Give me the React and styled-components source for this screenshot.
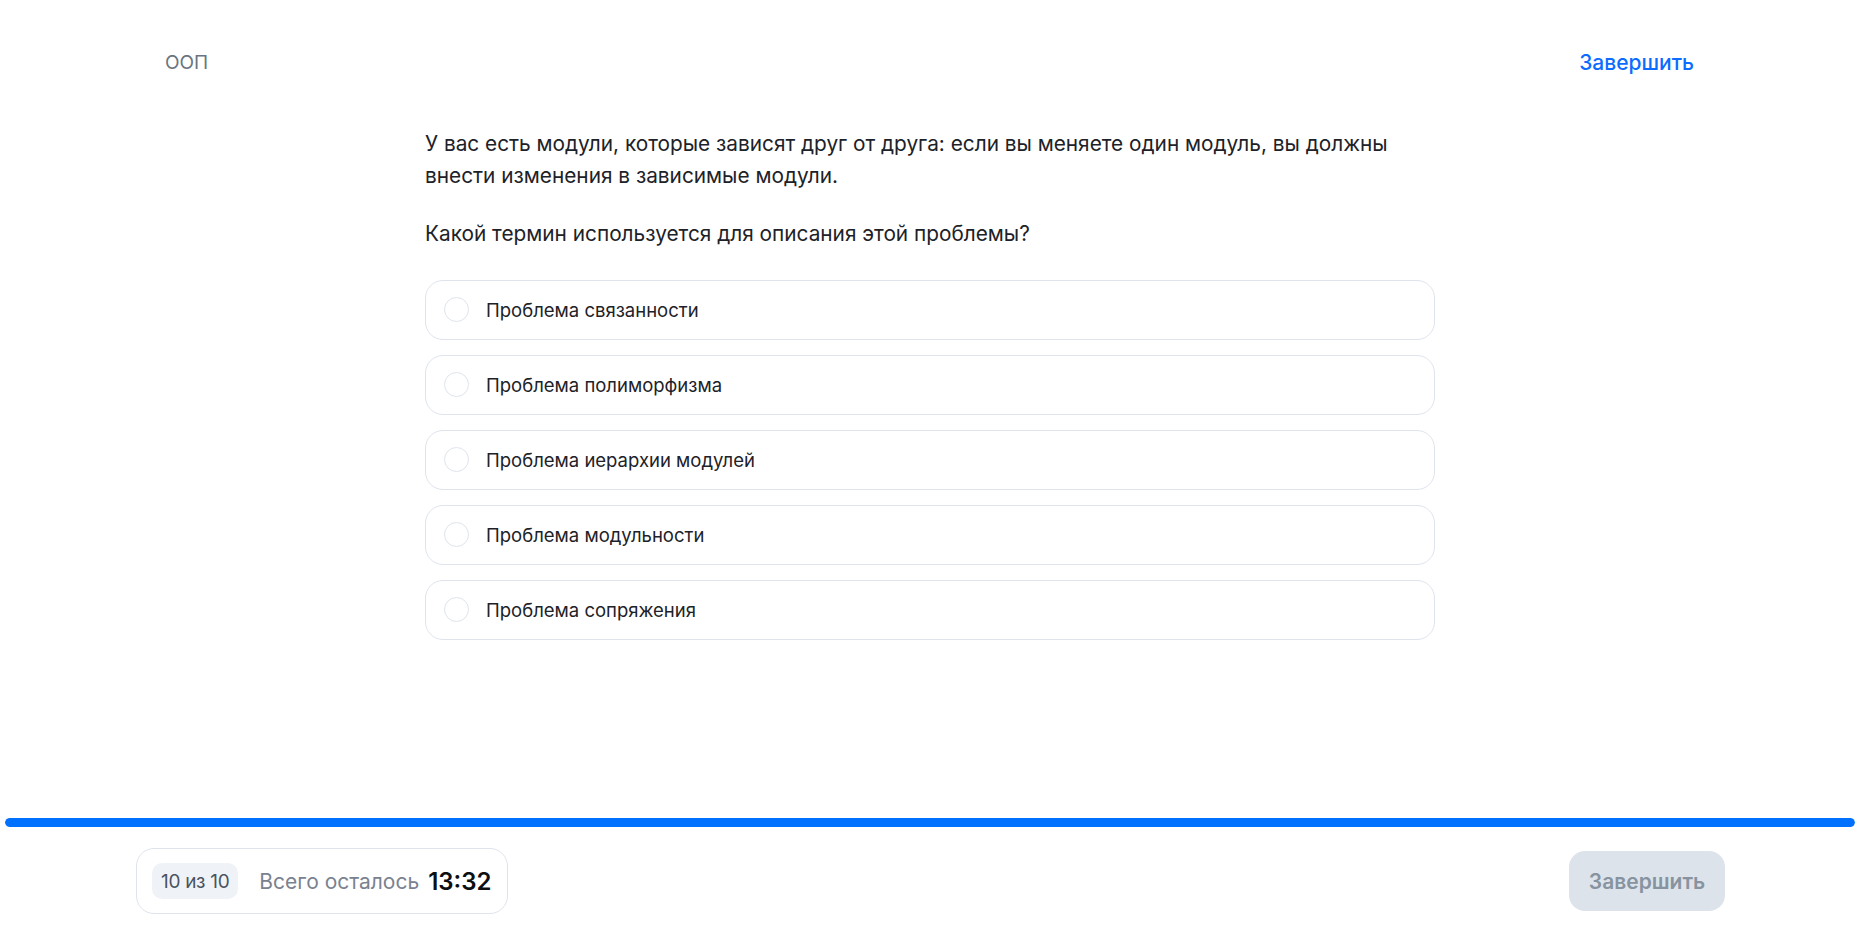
import React, { useState } from 'react';
import styled, { createGlobalStyle } from 'styled-components';

const GlobalStyle = createGlobalStyle`
  html, body {
    margin: 0;
    padding: 0;
    background: #ffffff;
  }
  body {
    font-family: Inter, "Noto Sans", "Liberation Sans", sans-serif;
    color: #1d2228;
  }
  * {
    box-sizing: border-box;
  }
`;

const options = [
  'Проблема связанности',
  'Проблема полиморфизма',
  'Проблема иерархии модулей',
  'Проблема модульности',
  'Проблема сопряжения',
];

function App() {
  const [selected, setSelected] = useState(null);

  return (
    <Page>
      <GlobalStyle />
      <Header>
        <Topic>ООП</Topic>
        <HeaderLink>Завершить</HeaderLink>
      </Header>

      <Main>
        <Question>
          <p>
            У вас есть модули, которые зависят друг от друга: если вы меняете один модуль, вы должны
            внести изменения в зависимые модули.
          </p>
          <p>Какой термин используется для описания этой проблемы?</p>
        </Question>

        <Options>
          {options.map((text, i) => (
            <Option key={text} active={selected === i} onClick={() => setSelected(i)}>
              <Radio active={selected === i} />
              <OptionText>{text}</OptionText>
            </Option>
          ))}
        </Options>
      </Main>

      <Footer>
        <Track>
          <Fill style={{ width: `${(10 / 10) * 100}%` }} />
        </Track>
        <FooterRow>
          <Status>
            <Counter>10 из 10</Counter>
            <Remaining>Всего осталось</Remaining>
            <Timer>13:32</Timer>
          </Status>
          <FinishButton disabled>Завершить</FinishButton>
        </FooterRow>
      </Footer>
    </Page>
  );
}

const Page = styled.div`
  min-height: 100vh;
  display: flex;
  flex-direction: column;
`;

const Header = styled.header`
  display: flex;
  justify-content: space-between;
  align-items: center;
  padding: 51px 166px 0 165px;
  height: 75px;
`;

const Topic = styled.span`
  font-size: 19px;
  line-height: 24px;
  color: #6b7480;
`;

const HeaderLink = styled.a`
  font-size: 21px;
  line-height: 24px;
  font-weight: 500;
  color: #0b6cff;
  cursor: pointer;
`;

const Main = styled.main`
  flex: 1;
  width: 1010px;
  margin: 0 auto;
  padding-top: 53px;
`;

const Question = styled.div`
  font-size: 20.8px;
  line-height: 32px;
  color: #1d2228;

  p {
    margin: 0;
  }
  p + p {
    margin-top: 26px;
  }
`;

const Options = styled.div`
  display: flex;
  flex-direction: column;
  gap: 15px;
  margin-top: 30px;
`;

const Option = styled.div`
  display: flex;
  align-items: center;
  gap: 17px;
  height: 60px;
  padding: 0 18px 1px;
  border: 1px solid ${p => (p.active ? '#0b6cff' : '#dfe4ec')};
  border-radius: 18px;
  cursor: pointer;
`;

const Radio = styled.span`
  width: 25px;
  height: 25px;
  flex-shrink: 0;
  border-radius: 50%;
  border: ${p => (p.active ? '7px solid #0b6cff' : '1px solid #dfe4ec')};
`;

const OptionText = styled.span`
  font-size: 18.5px;
  line-height: 24px;
  color: #1d2228;
`;

const Footer = styled.footer`
  display: flex;
  flex-direction: column;
`;

const Track = styled.div`
  height: 9px;
  margin: 0 5px;
  border-radius: 5px;
  background: #e6ebf1;
  overflow: hidden;
`;

const Fill = styled.div`
  height: 100%;
  border-radius: 5px;
  background: #0070ff;
`;

const FooterRow = styled.div`
  display: flex;
  justify-content: space-between;
  align-items: center;
  padding: 21px 135px 21px 136px;
`;

const Status = styled.div`
  display: flex;
  align-items: center;
  height: 66px;
  padding: 0 15px;
  border: 1px solid #dfe4ec;
  border-radius: 18px;
`;

const Counter = styled.span`
  display: flex;
  align-items: center;
  height: 36px;
  padding: 0 9px;
  border-radius: 10px;
  background: #eff3f8;
  font-size: 19px;
  color: #4b535e;
  letter-spacing: -0.3px;
`;

const Remaining = styled.span`
  margin-left: 21px;
  font-size: 21px;
  color: #7a8290;
`;

const Timer = styled.span`
  margin-left: 9px;
  font-size: 24px;
  font-weight: 600;
  color: #0d0f12;
`;

const FinishButton = styled.button`
  width: 156px;
  height: 60px;
  border: none;
  border-radius: 16px;
  background: #dde3eb;
  color: #8793a0;
  font-family: inherit;
  font-size: 21px;
  font-weight: 600;
  cursor: not-allowed;
`;

export default App;
